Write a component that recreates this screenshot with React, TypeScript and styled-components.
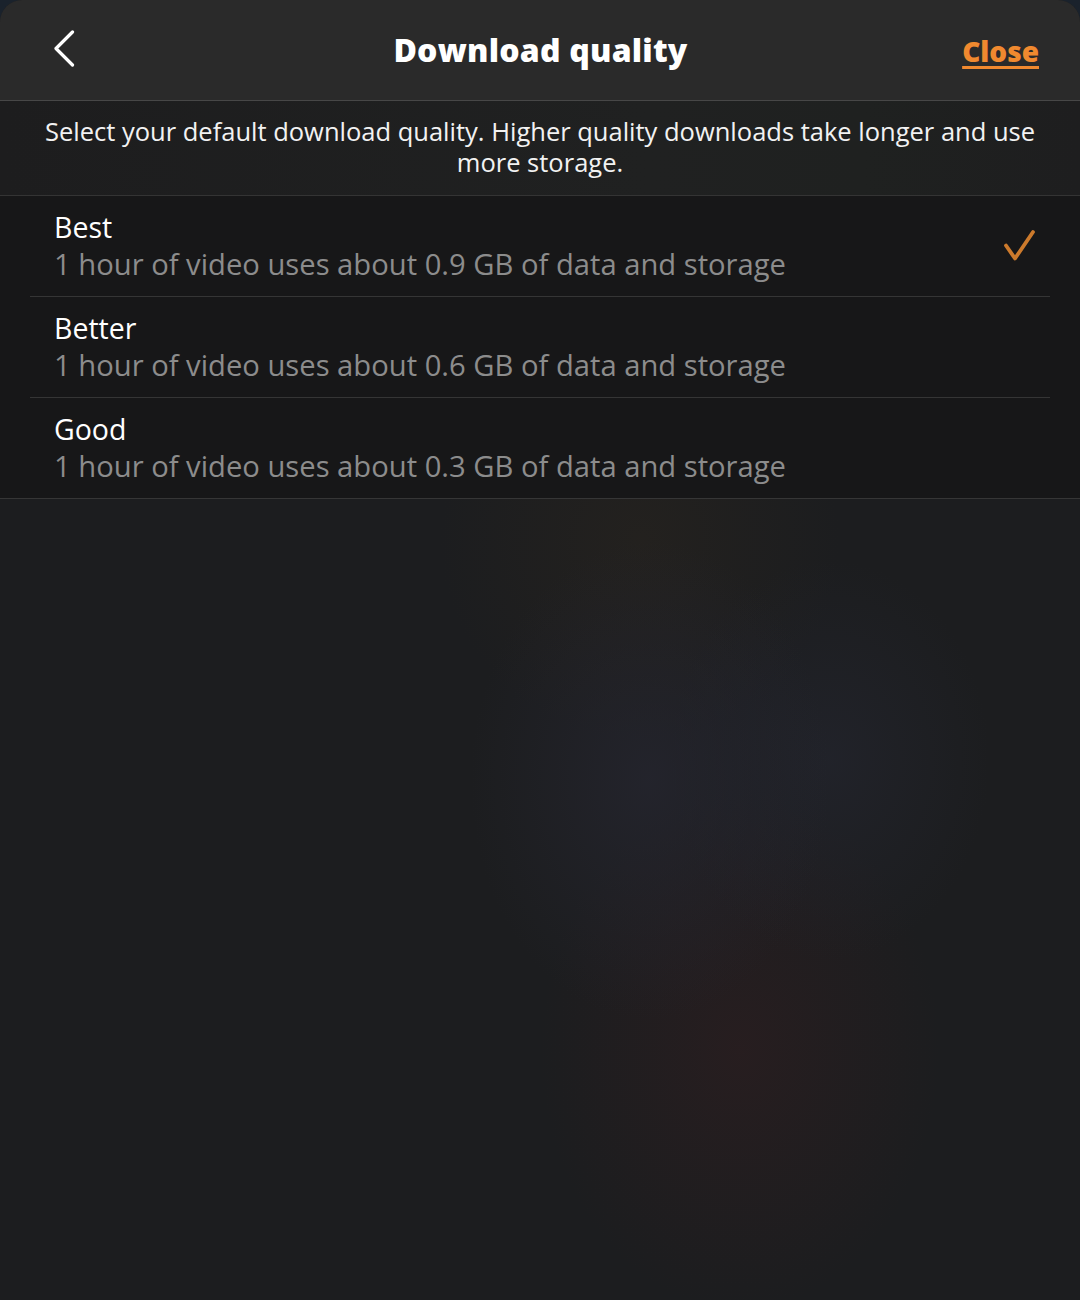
import React from "react";
import styled, { createGlobalStyle } from "styled-components";

const Global = createGlobalStyle`
  html, body { margin: 0; padding: 0; background: #1a222c; }
  body { font-family: "Open Sans", "Noto Sans", sans-serif; -webkit-font-smoothing: antialiased; }
  * { box-sizing: border-box; }
`;

const Sheet = styled.div`
  width: 1080px;
  height: 1300px;
  display: flex;
  flex-direction: column;
  border-radius: 22px 22px 0 0;
  overflow: hidden;
  background:
    radial-gradient(ellipse 180px 240px at 650px 780px, rgba(40, 40, 52, 0.6), transparent),
    radial-gradient(ellipse 160px 200px at 830px 760px, rgba(38, 40, 52, 0.5), transparent),
    radial-gradient(ellipse 200px 260px at 740px 1050px, rgba(48, 30, 32, 0.55), transparent),
    radial-gradient(ellipse 200px 200px at 640px 540px, rgba(44, 38, 30, 0.45), transparent),
    #1c1d1f;
`;

const Header = styled.header`
  height: 101px;
  flex: none;
  display: grid;
  grid-template-columns: 1fr auto 1fr;
  align-items: center;
  padding: 0 41px 0 52px;
  background: #2a2a2a;
  border-bottom: 1px solid #474747;
`;

const BackButton = styled.button`
  justify-self: start;
  background: none;
  border: none;
  padding: 0;
  width: 30px;
  height: 40px;
  display: flex;
  align-items: center;
  margin-top: -3px;
  cursor: pointer;
`;

const Title = styled.h1`
  margin: 0;
  margin-top: -1px;
  margin-right: 10px;
  color: #ffffff;
  font-size: 32px;
  font-weight: 800;
  letter-spacing: 0.2px;
`;

const CloseLink = styled.a`
  justify-self: end;
  color: #f0892f;
  font-size: 28px;
  font-weight: 800;
  text-decoration: underline;
  text-decoration-thickness: 3px;
  text-underline-offset: 4px;
  margin-top: 1px;
`;

const Intro = styled.p`
  margin: 0;
  flex: none;
  height: 95px;
  padding: 15px 40px 0;
  text-align: center;
  color: #f2f2f2;
  font-size: 25.5px;
  line-height: 31px;
  background: linear-gradient(90deg, #1d1d1e 0%, #202121 60%, #1f2120 80%, #1e1e1f 100%);
  border-bottom: 1px solid #343434;
`;

const List = styled.ul`
  list-style: none;
  margin: 0;
  padding: 0 30px;
  flex: none;
  background: #171718;
  border-bottom: 1px solid #363636;
`;

const Row = styled.li<{ $last?: boolean }>`
  height: ${(p) => (p.$last ? "100px" : "101px")};
  display: flex;
  align-items: center;
  padding: 0 14px 0 24px;
  border-bottom: ${(p) => (p.$last ? "none" : "1px solid #353535")};
`;

const RowText = styled.div`
  flex: 1;
  display: flex;
  flex-direction: column;
  margin-top: -1px;
`;

const RowTitle = styled.span`
  color: #ffffff;
  font-size: 28.5px;
  line-height: 37px;
`;

const RowSub = styled.span`
  color: #8c8c8c;
  font-size: 29.2px;
  line-height: 37px;
`;

const Check = () => (
  <svg width="34" height="34" viewBox="0 0 34 34">
    <path d="M4 16.5 L13 29.5 L31 3" fill="none" stroke="#cc7a2c" strokeWidth="3.8" strokeLinecap="round" strokeLinejoin="round" />
  </svg>
);

const Chevron = () => (
  <svg width="26" height="38" viewBox="0 0 26 38">
    <path d="M20.5 2 L4 18.5 L20.5 35" fill="none" stroke="#ffffff" strokeWidth="3.2" strokeLinecap="round" strokeLinejoin="round" />
  </svg>
);

const options = [
  { name: "Best", gb: "0.9", selected: true },
  { name: "Better", gb: "0.6", selected: false },
  { name: "Good", gb: "0.3", selected: false },
];

export default function App() {
  return (
    <>
      <Global />
      <Sheet>
        <Header>
          <BackButton aria-label="Back">
            <Chevron />
          </BackButton>
          <Title>Download quality</Title>
          <CloseLink href="#">Close</CloseLink>
        </Header>
        <Intro>
          Select your default download quality. Higher quality downloads take longer and use more storage.
        </Intro>
        <List>
          {options.map((o, i) => (
            <Row key={o.name} $last={i === options.length - 1}>
              <RowText>
                <RowTitle>{o.name}</RowTitle>
                <RowSub>1 hour of video uses about {o.gb} GB of data and storage</RowSub>
              </RowText>
              {o.selected && <Check />}
            </Row>
          ))}
        </List>
      </Sheet>
    </>
  );
}
